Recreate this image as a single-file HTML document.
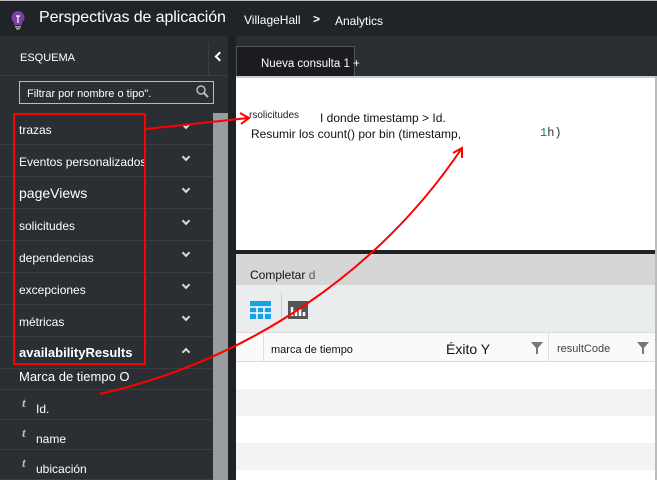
<!DOCTYPE html>
<html><head><style>
*{margin:0;padding:0;box-sizing:border-box}
body{width:657px;height:480px;overflow:hidden;background:#2a2d32;font-family:"Liberation Sans",sans-serif;position:relative}
.a{position:absolute}
.hd{left:0;top:0;width:657px;height:36px;background:#202328;border-top:1px solid #bbb}
.row{left:0;width:213px;height:32px;border-bottom:1px solid #3a3d42;color:#fff;font-size:12px}
.row span{position:absolute;left:19px;top:10px}
.chev{position:absolute;left:183px;top:9px;width:6px;height:6px;border-right:2px solid #ddd;border-bottom:2px solid #ddd;transform:rotate(45deg)}
.sub{left:0;width:213px;height:30px;border-bottom:1px solid #3a3d42;color:#fff;font-size:12px}
.sub i{position:absolute;left:22px;top:5px;color:#bbb;font-weight:bold;font-size:13px;font-family:"Liberation Serif",serif}
.sub span{position:absolute;left:36px;top:12px}
</style></head><body>
<div class="a hd">
 <svg class="a" style="left:10px;top:9px" width="16" height="20" viewBox="0 0 16 20"><path d="M8 1a6.5 6.5 0 0 0-4 11.6V15h8v-2.4A6.5 6.5 0 0 0 8 1z" fill="#7a3fa0"/><path d="M6 6h4M8 6v7" stroke="#fff" stroke-width="1.2"/><rect x="5" y="16" width="6" height="1.5" fill="#aaa"/><rect x="6" y="18" width="4" height="1.5" fill="#aaa"/></svg>
 <div class="a" style="left:39px;top:8px;color:#fff;font-size:16px;letter-spacing:-0.1px">Perspectivas de aplicación</div>
 <div class="a" style="left:244px;top:12px;color:#fff;font-size:12px">VillageHall</div>
 <div class="a" style="left:313px;top:11px;color:#fff;font-size:12px;font-weight:bold">&gt;</div>
 <div class="a" style="left:335px;top:13px;color:#fff;font-size:12px">Analytics</div>
</div>
<div class="a" style="left:0;top:36px;width:228px;height:444px;background:#2b2e33"></div>
<div class="a" style="left:20px;top:52px;color:#fff;font-size:11px">ESQUEMA</div>
<div class="a" style="left:208px;top:42px;width:1px;height:33px;background:#3a3d42"></div>
<div class="a" style="left:216px;top:53px;width:7px;height:7px;border-left:2px solid #fff;border-bottom:2px solid #fff;transform:rotate(45deg)"></div>
<div class="a" style="left:0;top:75px;width:228px;height:1px;background:#3a3d42"></div>
<div class="a" style="left:19px;top:81px;width:195px;height:23px;border:1px solid #bbb;color:#fff;font-size:11px;padding:6px 0 0 7px">Filtrar por nombre o tipo".</div>
<svg class="a" style="left:196px;top:85px" width="13" height="13"><circle cx="5" cy="5" r="4" stroke="#bbb" stroke-width="1.5" fill="none"/><path d="M8 8l4 4" stroke="#bbb" stroke-width="2"/></svg>
<div class="a" style="left:213px;top:113px;width:15px;height:367px;background:#9a9da0"></div>
<div class="a" style="left:228px;top:36px;width:8px;height:444px;background:#1e2125"></div>
<div class="a row" style="top:113px"><span>trazas</span><div class="chev"></div></div>
<div class="a row" style="top:145px"><span>Eventos personalizados</span><div class="chev"></div></div>
<div class="a row" style="top:177px"><span style="font-size:14px;top:8px">pageViews</span><div class="chev"></div></div>
<div class="a row" style="top:209px"><span>solicitudes</span><div class="chev"></div></div>
<div class="a row" style="top:241px"><span>dependencias</span><div class="chev"></div></div>
<div class="a row" style="top:273px"><span>excepciones</span><div class="chev"></div></div>
<div class="a row" style="top:305px"><span>métricas</span><div class="chev"></div></div>
<div class="a row" style="top:337px"><span style="font-weight:bold;font-size:13px;top:8px">availabilityResults</span><div class="chev" style="transform:rotate(225deg);top:12px"></div></div>
<div class="a" style="left:19px;top:369px;color:#fff;font-size:13px">Marca de tiempo O</div>
<div class="a" style="left:0;top:389px;width:213px;height:1px;background:#3a3d42"></div>
<div class="a sub" style="top:390px"><i>t</i><span>Id.</span></div>
<div class="a sub" style="top:420px"><i>t</i><span>name</span></div>
<div class="a sub" style="top:450px"><i>t</i><span>ubicación</span></div>
<div class="a" style="left:13px;top:113px;width:133px;height:252px;border:2px solid #f00"></div>
<!-- content -->
<div class="a" style="left:236px;top:46px;width:119px;height:32px;background:#1a1c1f;border:1px solid #555;border-bottom:none"></div>
<div class="a" style="left:261px;top:58px;color:#fff;font-size:11.5px">Nueva consulta 1 +</div>
<div class="a" style="left:236px;top:76px;width:421px;height:2px;background:#ccc"></div>
<div class="a" style="left:236px;top:78px;width:419px;height:172px;background:#fff"></div>
<div class="a" style="left:236px;top:362px;width:419px;height:118px;background:#fff"></div>
<div class="a" style="left:655px;top:76px;width:2px;height:404px;background:#bbb"></div>
<div class="a" style="left:249px;top:110px;color:#222;font-size:10px">rsolicitudes</div>
<div class="a" style="left:320px;top:111px;color:#111;font-size:12px">I donde timestamp &gt; Id.</div>
<div class="a" style="left:251px;top:127px;color:#111;font-size:12px">Resumir los count() por bin (timestamp,</div>
<div class="a" style="left:540px;top:126px;font-size:12px;font-family:'Liberation Mono',monospace"><span style="color:#098658">1</span><span style="color:#333">h)</span></div>
<div class="a" style="left:236px;top:250px;width:419px;height:4px;background:#1e2125"></div>
<div class="a" style="left:236px;top:254px;width:419px;height:31px;background:#d6d6d6"></div>
<div class="a" style="left:250px;top:268px;color:#111;font-size:12px">Completar <span style="color:#555">d</span></div>
<div class="a" style="left:236px;top:285px;width:419px;height:47px;background:#eaedee"></div>
<svg class="a" style="left:250px;top:301px" width="21" height="18"><rect width="21" height="18" fill="#1ba1e2"/><path d="M0 6h21M0 12h21M7 6v12M14 6v12" stroke="#fff" stroke-width="1.5"/></svg>
<div class="a" style="left:281px;top:293px;width:1px;height:30px;background:#ccc"></div>
<svg class="a" style="left:288px;top:301px" width="20" height="18"><rect width="20" height="18" fill="#555"/><path d="M4 15V6M8 15V9M12 15V8M16 15V11" stroke="#fff" stroke-width="2.5"/></svg>
<div class="a" style="left:236px;top:332px;width:419px;height:30px;background:#fafafa;border-top:1px solid #ddd;border-bottom:1px solid #ddd"></div>
<div class="a" style="left:263px;top:333px;width:1px;height:28px;background:#ddd"></div>
<div class="a" style="left:271px;top:344px;color:#111;font-size:11px">marca de tiempo</div>
<div class="a" style="left:446px;top:341px;color:#111;font-size:14px">Éxito Y</div>
<div class="a" style="left:548px;top:333px;width:1px;height:28px;background:#ddd"></div>
<div class="a" style="left:557px;top:343px;color:#444;font-size:11px">resultCode</div>
<svg class="a" style="left:531px;top:342px" width="12" height="12"><path d="M0 0h12L7 6v6H5V6z" fill="#777"/></svg>
<svg class="a" style="left:637px;top:342px" width="12" height="12"><path d="M0 0h12L7 6v6H5V6z" fill="#777"/></svg>
<div class="a" style="left:236px;top:389px;width:419px;height:27px;background:#f3f3f3"></div>
<div class="a" style="left:236px;top:443px;width:419px;height:27px;background:#f3f3f3"></div>
<!-- arrows -->
<svg class="a" style="left:0;top:0" width="657" height="480"><g stroke="#f00" stroke-width="2" fill="none"><path d="M146 129L248 118"/><path d="M240 113L249 118L241 124"/><path d="M100 394C250 360 380 270 462 148"/><path d="M453 153L462 148L462 158"/></g></svg>
</body></html>
